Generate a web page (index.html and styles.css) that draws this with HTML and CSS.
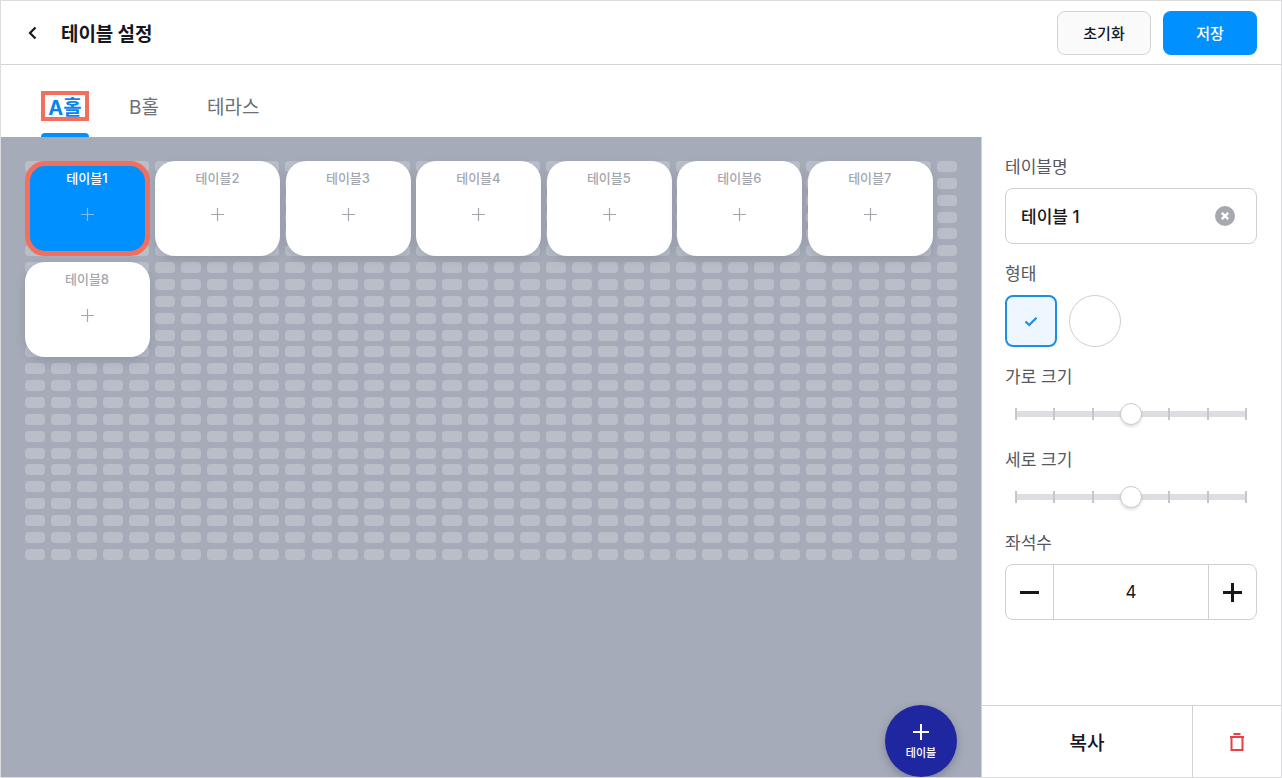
FILE: index.html
```html
<!DOCTYPE html>
<html lang="ko">
<head>
<meta charset="utf-8">
<title>테이블 설정</title>
<link rel="stylesheet" href="styles.css">
</head>
<body>
<div class="app">
  <header class="topbar">
    <div class="title-wrap">
      <svg class="back" width="12" height="14" viewBox="0 0 12 14"><path d="M8.500 1.500 3 7l5.500 5.500" fill="none" stroke="#16181d" stroke-width="2.200"/></svg>
      <h1 class="title">테이블 설정</h1>
    </div>
    <div class="actions">
      <button class="btn btn-ghost">초기화</button>
      <button class="btn btn-primary">저장</button>
    </div>
  </header>
  <nav class="tabs">
    <div class="tab tab-active"><span class="tab-label">A홀</span></div>
    <div class="tab">B홀</div>
    <div class="tab tab-last">테라스</div>
  </nav>
  <div class="body">
    <main class="floor">
      <div class="plan">
        <div class="cells" id="cells"></div>
        <div class="cards">
          <div class="card card-selected"><span class="card-name">테이블1</span><svg class="plus" width="13" height="13" viewBox="0 0 13 13"><path d="M6.500 0v13M0 6.500h13" stroke="currentColor" stroke-width="1.200"/></svg></div>
          <div class="card"><span class="card-name">테이블2</span><svg class="plus" width="13" height="13" viewBox="0 0 13 13"><path d="M6.500 0v13M0 6.500h13" stroke="currentColor" stroke-width="1.200"/></svg></div>
          <div class="card"><span class="card-name">테이블3</span><svg class="plus" width="13" height="13" viewBox="0 0 13 13"><path d="M6.500 0v13M0 6.500h13" stroke="currentColor" stroke-width="1.200"/></svg></div>
          <div class="card"><span class="card-name">테이블4</span><svg class="plus" width="13" height="13" viewBox="0 0 13 13"><path d="M6.500 0v13M0 6.500h13" stroke="currentColor" stroke-width="1.200"/></svg></div>
          <div class="card"><span class="card-name">테이블5</span><svg class="plus" width="13" height="13" viewBox="0 0 13 13"><path d="M6.500 0v13M0 6.500h13" stroke="currentColor" stroke-width="1.200"/></svg></div>
          <div class="card"><span class="card-name">테이블6</span><svg class="plus" width="13" height="13" viewBox="0 0 13 13"><path d="M6.500 0v13M0 6.500h13" stroke="currentColor" stroke-width="1.200"/></svg></div>
          <div class="card"><span class="card-name">테이블7</span><svg class="plus" width="13" height="13" viewBox="0 0 13 13"><path d="M6.500 0v13M0 6.500h13" stroke="currentColor" stroke-width="1.200"/></svg></div>
          <div class="card"><span class="card-name">테이블8</span><svg class="plus" width="13" height="13" viewBox="0 0 13 13"><path d="M6.500 0v13M0 6.500h13" stroke="currentColor" stroke-width="1.200"/></svg></div>
        </div>
      </div>
      <button class="fab">
        <svg width="16" height="16" viewBox="0 0 16 16"><path d="M8 0v16M0 8h16" stroke="#fff" stroke-width="2"/></svg>
        <span class="fab-label">테이블</span>
      </button>
    </main>
    <aside class="side">
      <div class="form">
        <div class="field field-name">
          <label class="label">테이블명</label>
          <div class="input"><span class="input-text">테이블 1</span>
            <svg width="20" height="20" viewBox="0 0 20 20"><circle cx="10" cy="10" r="10" fill="#a6a8af"/><path d="M6.800 6.800l6.400 6.400M13.200 6.800l-6.400 6.400" stroke="#fff" stroke-width="2.400"/></svg>
          </div>
        </div>
        <div class="field field-shape">
          <label class="label">형태</label>
          <div class="shapes">
            <div class="shape shape-square"><svg width="14" height="11" viewBox="0 0 14 11"><path d="M1.500 5.500 5.200 9 12.500 1.800" fill="none" stroke="#1b8fe8" stroke-width="2.300"/></svg></div>
            <div class="shape shape-circle"></div>
          </div>
        </div>
        <div class="field field-slider">
          <label class="label">가로 크기</label>
          <div class="slider"><div class="track"><i></i><i></i><i></i><i></i><i></i><i></i><i></i></div><div class="thumb"></div></div>
        </div>
        <div class="field field-slider">
          <label class="label">세로 크기</label>
          <div class="slider"><div class="track"><i></i><i></i><i></i><i></i><i></i><i></i><i></i></div><div class="thumb"></div></div>
        </div>
        <div class="field">
          <label class="label">좌석수</label>
          <div class="stepper">
            <div class="step"><svg width="19" height="3" viewBox="0 0 19 3"><path d="M0 1.500h19" stroke="#16181d" stroke-width="3"/></svg></div>
            <div class="count">4</div>
            <div class="step"><svg width="19" height="19" viewBox="0 0 19 19"><path d="M9.500 0v19M0 9.500h19" stroke="#16181d" stroke-width="3"/></svg></div>
          </div>
        </div>
      </div>
      <div class="side-foot">
        <button class="copy">복사</button>
        <button class="trash">
          <svg width="14" height="18" viewBox="0 0 14 18"><path d="M3.500 1h7M0 4h14M1.500 4v13h11V4" fill="none" stroke="#e5414b" stroke-width="2"/></svg>
        </button>
      </div>
    </aside>
  </div>
</div>
<script src="cells.js"></script>
</body>
</html>
```
FILE: cells.js
```js
var host = document.getElementById('cells');
for (var i = 0; i < 36 * 24; i++) {
  var cell = document.createElement('div');
  cell.className = 'cell';
  host.appendChild(cell);
}
```
FILE: styles.css
```css
* { box-sizing: border-box; }
html, body { margin: 0; padding: 0; }
body {
  width: 1282px;
  height: 778px;
  overflow: hidden;
  background: #fff;
  color: #16181d;
  font-family: "Inter", "Noto Sans CJK KR", "Noto Sans", sans-serif;
}
button { font: inherit; cursor: pointer; }
.app {
  width: 1282px;
  height: 778px;
  border: 1px solid #dcdcde;
  display: flex;
  flex-direction: column;
}
.topbar {
  height: 64px;
  flex: none;
  display: flex;
  align-items: center;
  justify-content: space-between;
  padding: 0 24px;
  border-bottom: 1px solid #d2d3d6;
}
.title-wrap { display: flex; align-items: center; }
.back { margin-right: 22px; margin-left: 2px; }
.title { margin: 0 0 1px; font-size: 19px; font-weight: 700; letter-spacing: -0.1px; }
.actions { display: flex; gap: 12px; }
.btn {
  height: 44px;
  border-radius: 8px;
  font-size: 15px;
  font-weight: 500;
}
.btn-ghost { width: 94px; background: #fafafa; border: 1px solid #d2d3d6; color: #16181d; }
.btn-primary { width: 94px; background: #0090ff; border: 0; color: #fff; }
.tabs {
  height: 72px;
  flex: none;
  display: flex;
  gap: 40px;
  padding-left: 40px;
  background: #fff;
}
.tab {
  position: relative;
  display: flex;
  align-items: center;
  height: 72px;
  padding-top: 8px;
  font-size: 19px;
  color: #6d7076;
}
.tab-last { margin-left: 8px; }
.tab-active { width: 48px; justify-content: center; padding-top: 10px; }
.tab-active::after {
  content: "";
  position: absolute;
  left: 0;
  right: 0;
  bottom: 0;
  height: 4px;
  border-radius: 4px 4px 0 0;
  background: #0090ff;
}
.tab-label {
  width: 48px;
  height: 30px;
  display: flex;
  align-items: center;
  justify-content: center;
  color: #0b84ee;
  font-weight: 700;
  font-size: 20px;
  border: 4px solid #f26f5e;
  background: #fff;
}
.body { flex: 1; display: flex; min-height: 0; }
.floor {
  position: relative;
  flex: 1;
  background: #a5abb8;
  padding: 24px 0 0 24px;
  overflow: hidden;
}
.plan { position: relative; width: 933px; height: 398px; }
.cells, .cards {
  display: grid;
  grid-template-columns: repeat(36, 20px);
  grid-auto-rows: 11px;
  column-gap: 6.06px;
  row-gap: 5.87px;
}
.cell { background: #b9bec9; border-radius: 4px; }
.cards { position: absolute; top: 0; left: 0; column-gap: 6.1px; }
.card {
  grid-column: span 5;
  grid-row: span 6;
  width: 125px;
  height: 95px;
  background: #fff;
  border-radius: 20px;
  box-shadow: 0 4px 10px rgba(80, 86, 100, 0.2);
  display: flex;
  flex-direction: column;
  align-items: center;
  padding-top: 8px;
  color: #a4a7ad;
}
.card-name { font-size: 13px; font-weight: 500; line-height: 18px; padding-right: 1px; }
.plus { margin-top: 21px; color: #a4a7ad; }
.card-selected {
  background: #0090ff;
  border: 5px solid #f26f5e;
  padding-top: 3px;
  color: #fff;
  box-shadow: none;
}
.card-selected .plus { color: #7fbde8; }
.fab {
  position: absolute;
  right: 24px;
  bottom: 0;
  width: 72px;
  height: 72px;
  border-radius: 50%;
  border: 0;
  background: #1f27a0;
  box-shadow: 0 3px 8px rgba(50, 55, 90, 0.35);
  color: #fff;
  display: flex;
  flex-direction: column;
  align-items: center;
  justify-content: center;
  gap: 6px;
  padding: 2px 0 0;
}
.fab-label { font-size: 11px; font-weight: 500; line-height: 14px; }
.side {
  width: 300px;
  flex: none;
  border-left: 1px solid #d2d3d6;
  display: flex;
  flex-direction: column;
  background: #fff;
}
.form { flex: 1; padding: 17px 24px 0 23px; display: flex; flex-direction: column; }
.field { display: flex; flex-direction: column; }
.field-name { margin-bottom: 17px; }
.field-shape { margin-bottom: 17px; }
.field-slider { margin-bottom: 21px; }
.label { font-size: 17px; line-height: 26px; color: #55585e; }
.input {
  margin-top: 8px;
  height: 56px;
  border: 1px solid #cfd0d3;
  border-radius: 8px;
  display: flex;
  align-items: center;
  justify-content: space-between;
  padding: 0 21px 0 15px;
}
.input-text { font-size: 17px; font-weight: 500; padding-bottom: 2px; }
.shapes { display: flex; gap: 12px; margin-top: 8px; }
.shape { width: 52px; height: 52px; }
.shape-square {
  background: #eef7ff;
  border: 2px solid #1b8fe8;
  border-radius: 8px;
  display: flex;
  align-items: center;
  justify-content: center;
}
.shape-circle { border: 1px solid #cfd0d3; border-radius: 50%; }
.slider { position: relative; height: 24px; margin: 12px 10px 0 10px; display: flex; align-items: center; }
.track {
  width: 100%;
  height: 6px;
  background: #dddee2;
  display: flex;
  align-items: center;
  justify-content: space-between;
}
.track i { width: 2px; height: 12px; background: #c5c7cb; display: block; }
.thumb {
  position: absolute;
  left: 105px;
  top: 1px;
  width: 22px;
  height: 22px;
  border-radius: 50%;
  background: #fff;
  border: 1px solid #c9cace;
  box-shadow: 0 2px 3px rgba(0, 0, 0, 0.12);
}
.stepper {
  margin-top: 8px;
  height: 56px;
  display: flex;
  border: 1px solid #cfd0d3;
  border-radius: 8px;
}
.step { width: 47px; flex: none; display: flex; align-items: center; justify-content: center; }
.count {
  flex: 1;
  display: flex;
  align-items: center;
  justify-content: center;
  font-size: 17px;
  border-left: 1px solid #cfd0d3;
  border-right: 1px solid #cfd0d3;
}
.side-foot { height: 72px; flex: none; display: flex; border-top: 1px solid #d2d3d6; }
.copy { flex: 1; background: #fff; border: 0; font-size: 19px; font-weight: 500; color: #16181d; }
.trash {
  width: 89px;
  background: #fff;
  border: 0;
  border-left: 1px solid #d2d3d6;
  display: flex;
  align-items: center;
  justify-content: center;
}
```
